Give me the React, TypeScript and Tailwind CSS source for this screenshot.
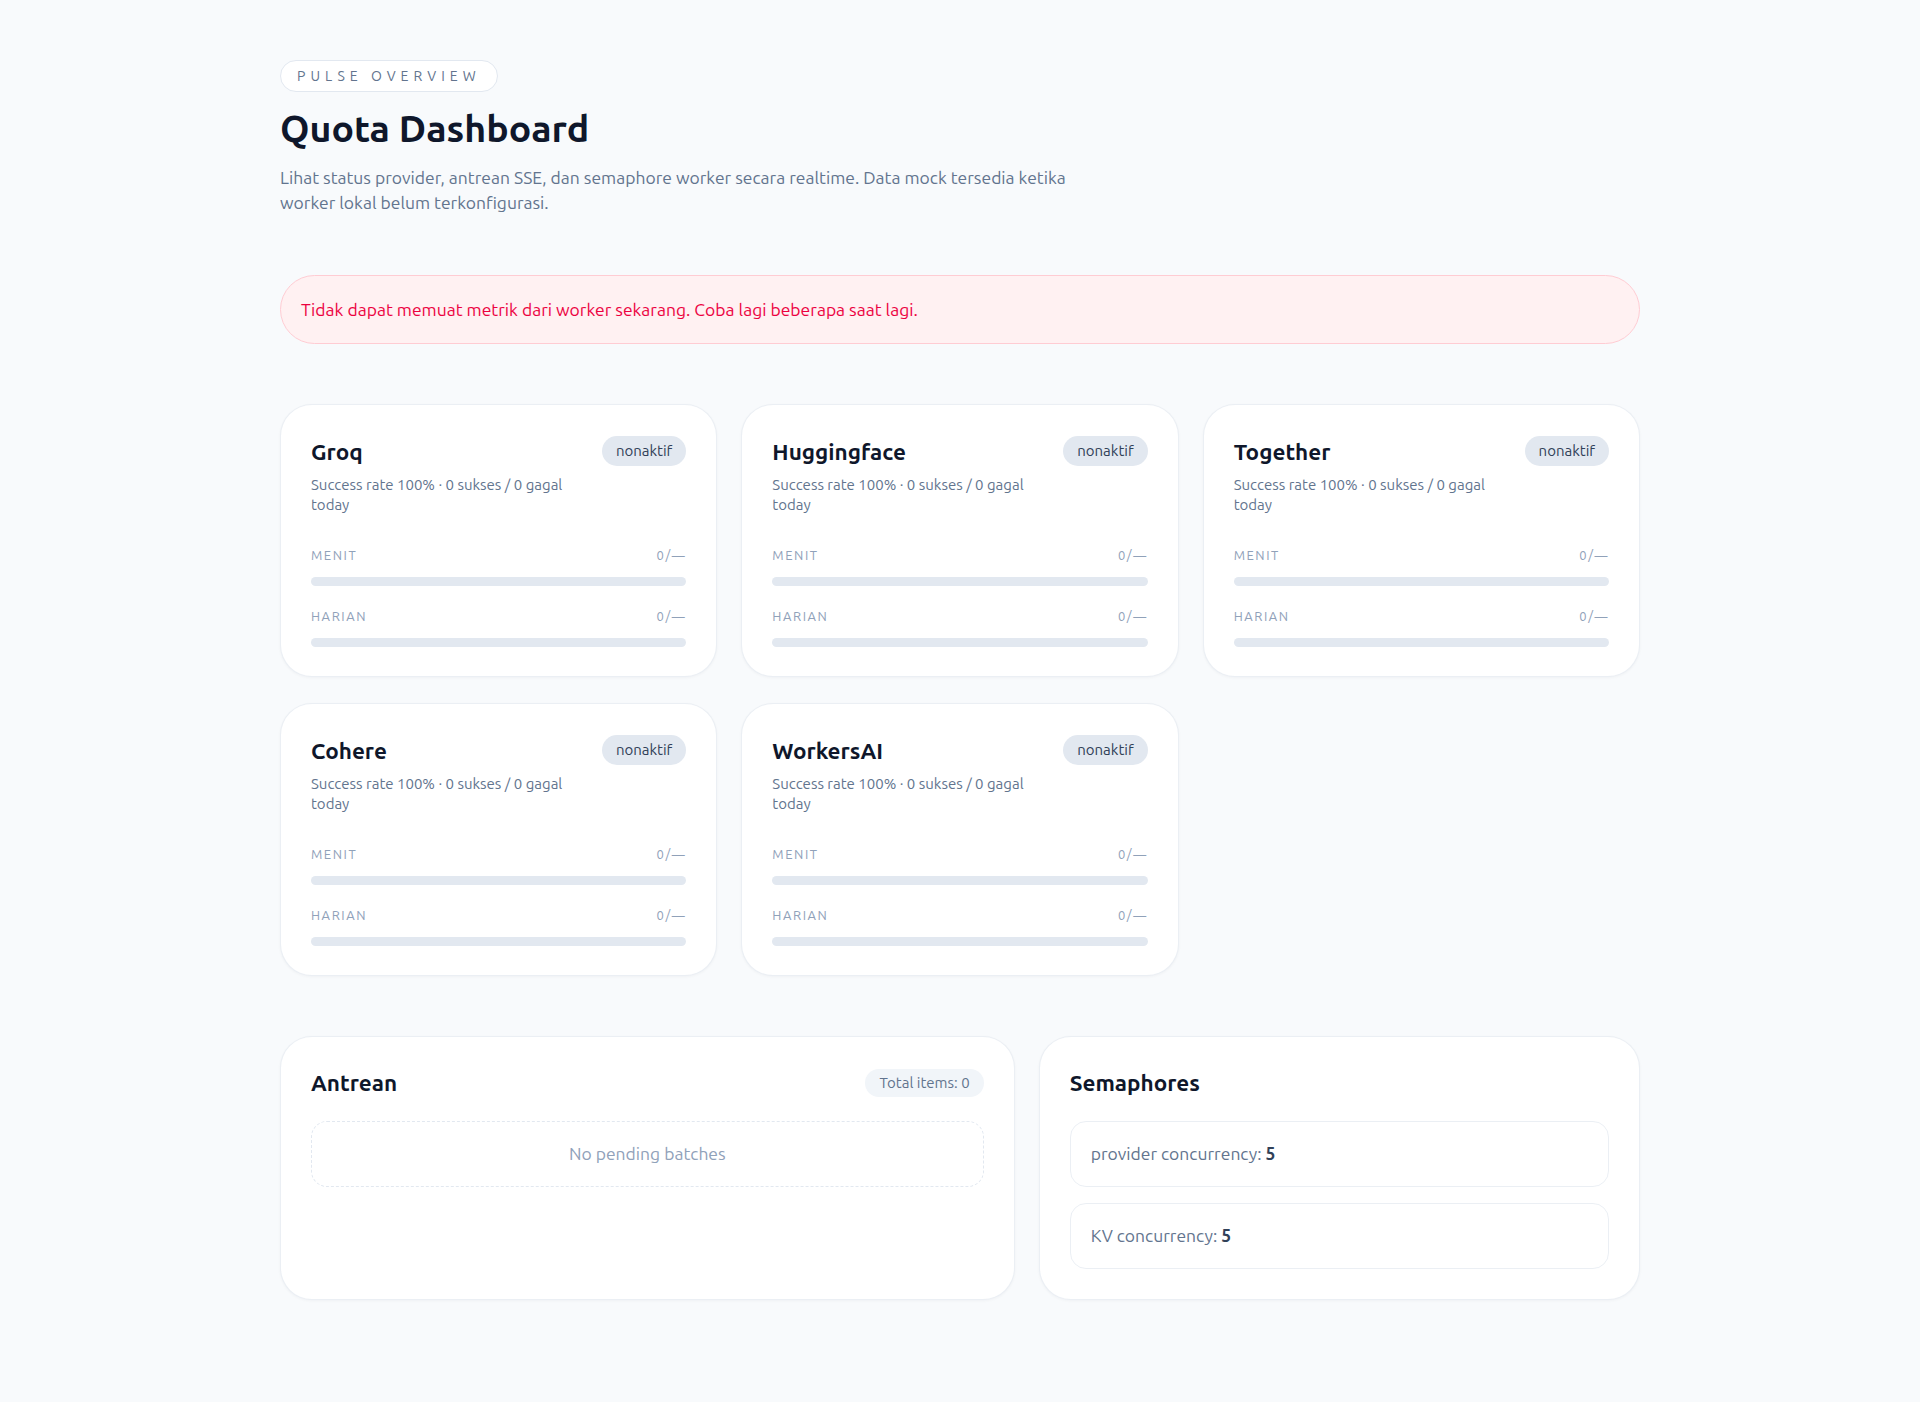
const providers = ["Groq", "Huggingface", "Together", "Cohere", "WorkersAI"];

const limits = [
  { label: "Menit", value: "0/—" },
  { label: "Harian", value: "0/—" },
];

const semaphores = [
  { label: "provider concurrency:", value: 5 },
  { label: "KV concurrency:", value: 5 },
];

function ProviderCard({ name }: { name: string }) {
  return (
    <div className="bg-white border border-slate-200/70 rounded-[32px] px-[30px] pt-[31px] pb-[29px] shadow-[0_1px_3px_rgba(15,23,42,0.04)]">
      <div className="flex items-start justify-between gap-4">
        <div>
          <h3 className="text-[22.5px] leading-8 font-bold text-slate-900">{name}</h3>
          <p className="mt-[7px] max-w-[265px] text-[15px] leading-5 text-slate-500">
            Success rate 100% · 0 sukses / 0 gagal today
          </p>
        </div>
        <span className="shrink-0 rounded-full bg-slate-200 px-3.5 py-[5px] text-[15px] leading-5 text-slate-700">
          nonaktif
        </span>
      </div>

      <div className="mt-[31px]">
        {limits.map((limit, i) => (
          <div key={limit.label} className={i > 0 ? "mt-[21px]" : ""}>
            <div className="flex items-center justify-between text-[13px] leading-[18px] tracking-[0.12em] text-slate-400">
              <span className="uppercase">{limit.label}</span>
              <span>{limit.value}</span>
            </div>
            <div className="mt-[13px] h-[9px] rounded-full bg-slate-200" />
          </div>
        ))}
      </div>
    </div>
  );
}

export default function App() {
  return (
    <div className="min-h-screen bg-[#f8fafc] font-['Ubuntu','Lato',sans-serif] text-slate-900">
      <main className="max-w-[1360px] mx-auto pt-[60px] pb-24 flex flex-col gap-15">
        <header>
          <span className="inline-block rounded-full border border-slate-200 bg-white px-4 py-[5px] text-sm leading-5 uppercase tracking-[0.36em] text-slate-500">
            Pulse Overview
          </span>
          <h1 className="mt-4 text-[37.5px] leading-10 font-bold text-slate-900">Quota Dashboard</h1>
          <p className="mt-[17px] max-w-[800px] text-[17.5px] leading-[25px] text-slate-500">
            Lihat status provider, antrean SSE, dan semaphore worker secara realtime. Data mock tersedia ketika worker lokal belum terkonfigurasi.
          </p>
        </header>

        <div className="rounded-full border border-rose-200 bg-rose-50 px-5 py-[21px] text-[17.5px] leading-[25px] text-rose-600">
          Tidak dapat memuat metrik dari worker sekarang. Coba lagi beberapa saat lagi.
        </div>

        <section className="grid grid-cols-3 gap-x-6 gap-y-[26px]">
          {providers.map((p) => (
            <ProviderCard key={p} name={p} />
          ))}
        </section>

        <section className="grid grid-cols-[733fr_600fr] gap-6">
          {/* Queue */}
          <div className="bg-white border border-slate-200/70 rounded-[32px] p-[30px] shadow-[0_1px_3px_rgba(15,23,42,0.04)]">
            <div className="flex items-center justify-between">
              <h3 className="text-[22.5px] leading-8 font-bold text-slate-900">Antrean</h3>
              <span className="rounded-full bg-slate-100 px-3.5 py-1 text-[15px] leading-5 text-slate-500">
                Total items: 0
              </span>
            </div>
            <div className="mt-[22px] rounded-2xl border border-dashed border-slate-200 py-5 text-center text-[17.5px] leading-6 text-slate-400">
              No pending batches
            </div>
          </div>

          {/* Semaphores */}
          <div className="bg-white border border-slate-200/70 rounded-[32px] p-[30px] shadow-[0_1px_3px_rgba(15,23,42,0.04)]">
            <h3 className="text-[22.5px] leading-8 font-bold text-slate-900">Semaphores</h3>
            <div className="mt-[22px] flex flex-col gap-4">
              {semaphores.map((s) => (
                <div
                  key={s.label}
                  className="rounded-2xl border border-slate-200/70 px-5 py-5 text-[17.5px] leading-6 text-slate-500"
                >
                  {s.label} <span className="font-bold text-slate-700">{s.value}</span>
                </div>
              ))}
            </div>
          </div>
        </section>
      </main>
    </div>
  );
}
